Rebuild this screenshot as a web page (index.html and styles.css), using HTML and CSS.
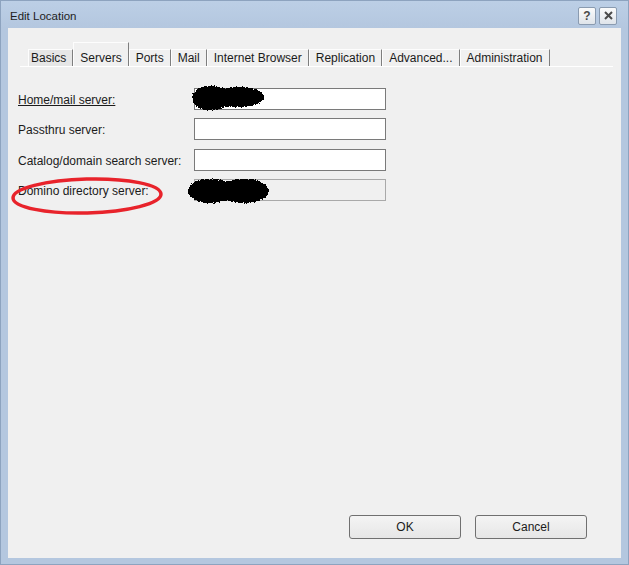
FILE: index.html
```html
<!DOCTYPE html>
<html lang="en">
<head>
  <meta charset="UTF-8" />
  <title>Edit Location</title>
  <link rel="stylesheet" href="styles.css">
</head>
<body>
  <div class="window">
    <div class="titlebar">
      <span class="title">Edit Location</span>
      <div class="caption-buttons">
        <span class="cap-btn help">?</span>
        <span class="cap-btn close">
          <svg width="9" height="9" viewBox="0 0 9 9"><path d="M1 1 L8 8 M8 1 L1 8" stroke="#4a4a4a" stroke-width="2"/></svg>
        </span>
      </div>
    </div>

    <div class="client">
      <div class="tabstrip">
        <span class="tab">Basics</span>
        <span class="tab active">Servers</span>
        <span class="tab">Ports</span>
        <span class="tab">Mail</span>
        <span class="tab">Internet Browser</span>
        <span class="tab">Replication</span>
        <span class="tab">Advanced...</span>
        <span class="tab">Administration</span>
      </div>

      <div class="form">
        <label class="field-label underlined">Home/mail server:</label>
        <div class="field">
          <span class="textbox"></span>
          <svg class="scribble home" width="84" height="34" viewBox="0 0 84 34">
            <defs>
              <!-- soft blob, broken up by noise into a grainy edge -->
              <filter id="grain" x="-20%" y="-30%" width="140%" height="160%">
                <feGaussianBlur in="SourceGraphic" stdDeviation="2" result="soft"/>
                <feTurbulence type="fractalNoise" baseFrequency="1.3" numOctaves="1" seed="7" result="noise"/>
                <feColorMatrix in="noise" type="matrix" values="0 0 0 0 0  0 0 0 0 0  0 0 0 0 0  1 0 0 0 0" result="na"/>
                <feComposite in="soft" in2="na" operator="arithmetic" k1="0" k2="1" k3="-0.55" k4="0" result="mix"/>
                <feComponentTransfer in="mix" result="dots">
                  <feFuncA type="discrete" tableValues="0 1"/>
                </feComponentTransfer>
                <feColorMatrix in="dots" type="matrix" values="0 0 0 0 0  0 0 0 0 0  0 0 0 0 0  0 0 0 1 0"/>
              </filter>
            </defs>
            <g filter="url(#grain)">
              <ellipse cx="24" cy="16" rx="21" ry="14" fill="#000"/>
              <ellipse cx="53" cy="15" rx="26" ry="12" fill="#000"/>
            </g>
          </svg>
        </div>

        <label class="field-label">Passthru server:</label>
        <div class="field"><span class="textbox"></span></div>

        <label class="field-label">Catalog/domain search server:</label>
        <div class="field"><span class="textbox"></span></div>

        <label class="field-label">Domino directory server:</label>
        <div class="field">
          <span class="textbox disabled"></span>
          <svg class="scribble domino" width="94" height="38" viewBox="0 0 94 38">
            <g filter="url(#grain)">
              <ellipse cx="28" cy="19" rx="24" ry="14" fill="#000"/>
              <ellipse cx="62" cy="19" rx="27" ry="14" fill="#000"/>
            </g>
          </svg>
        </div>
      </div>

      <!-- red marker ring around the directory label -->
      <svg class="marker" width="156" height="44" viewBox="0 0 156 44">
        <ellipse cx="77" cy="21" rx="74" ry="17" fill="none" stroke="#e8232b" stroke-width="3.5" transform="rotate(-1.5 77 21)"/>
      </svg>

      <div class="buttons">
        <button class="btn">OK</button>
        <button class="btn">Cancel</button>
      </div>
    </div>
  </div>
</body>
</html>
```

FILE: styles.css
```css
* { margin: 0; padding: 0; box-sizing: border-box; }
body {
  font-family: "Liberation Sans", Arial, sans-serif;
  font-size: 12px; color: #1b1b1b;
  background: #b6c9e1;
}
.window {
  width: 629px; height: 565px;
  display: flex; flex-direction: column;
  background: #b4c7df;
  border: 1px solid #8da3bf;
}

/* title bar */
.titlebar {
  height: 27px; flex: none;
  display: flex; align-items: center; justify-content: space-between;
  padding: 0 11px 0 9px;
  background: linear-gradient(#bccfe6, #b4c7df);
}
.title { font-size: 11.5px; color: #1e1e1e; padding-top: 2px; }
.caption-buttons { display: flex; gap: 3px; padding-top: 2px; }
.cap-btn {
  width: 18px; height: 18px;
  display: flex; align-items: center; justify-content: center;
  background: linear-gradient(#fbfbfb, #dfe4ea);
  border: 1px solid #8a9bb0; border-radius: 2px;
  font-weight: bold; font-size: 12px; color: #4a4a4a;
}

/* client area */
.client {
  flex: 1; position: relative;
  margin: 0 7px 6px 7px;
  background: #f0f0f0;
  display: flex; flex-direction: column;
}

.tabstrip {
  display: flex; align-items: flex-end;
  margin: 14px 8px 0 12px; padding-left: 8px;
  height: 25px;
  border-bottom: 1px solid #ffffff;
}
.tab {
  height: 17px; padding: 0 6px;
  display: flex; align-items: center;
  border-top: 1px solid #fdfdfd;
  border-left: 1px solid #fdfdfd;
  border-right: 1px solid #7e7e7e;
  white-space: nowrap;
}
.tab:first-child { background: #e6e6e6; padding-left: 2px; }
.tab.active {
  height: 24px; padding-top: 6px;
  background: #f0f0f0;
}

.form {
  display: grid;
  grid-template-columns: 176px 192px;
  grid-auto-rows: 22px;
  row-gap: 8.4px;
  margin: 21px 0 0 10px;
}
.field-label { display: flex; align-items: center; padding-top: 2px; }
.underlined { text-decoration: underline; }
.field { position: relative; }
.textbox {
  display: block; width: 100%; height: 100%;
  background: #ffffff;
  border: 1px solid #7a7a7a;
}
.textbox.disabled { background: #f0f0f0; border-color: #a9a9a9; }

.scribble { position: absolute; }
.scribble.home { left: -7px; top: -6px; }
.scribble.domino { left: -12px; top: -7px; }

.marker { position: absolute; left: 2px; top: 147px; }

.buttons {
  margin-top: auto;
  display: flex; justify-content: flex-end; gap: 14px;
  padding: 0 34px 19px 0;
}
.btn {
  width: 112px; height: 24px;
  font-family: inherit; font-size: 12px; color: #1b1b1b;
  background: linear-gradient(#f4f4f4, #e6e6e6);
  border: 1px solid #707070; border-radius: 3px;
}
```
